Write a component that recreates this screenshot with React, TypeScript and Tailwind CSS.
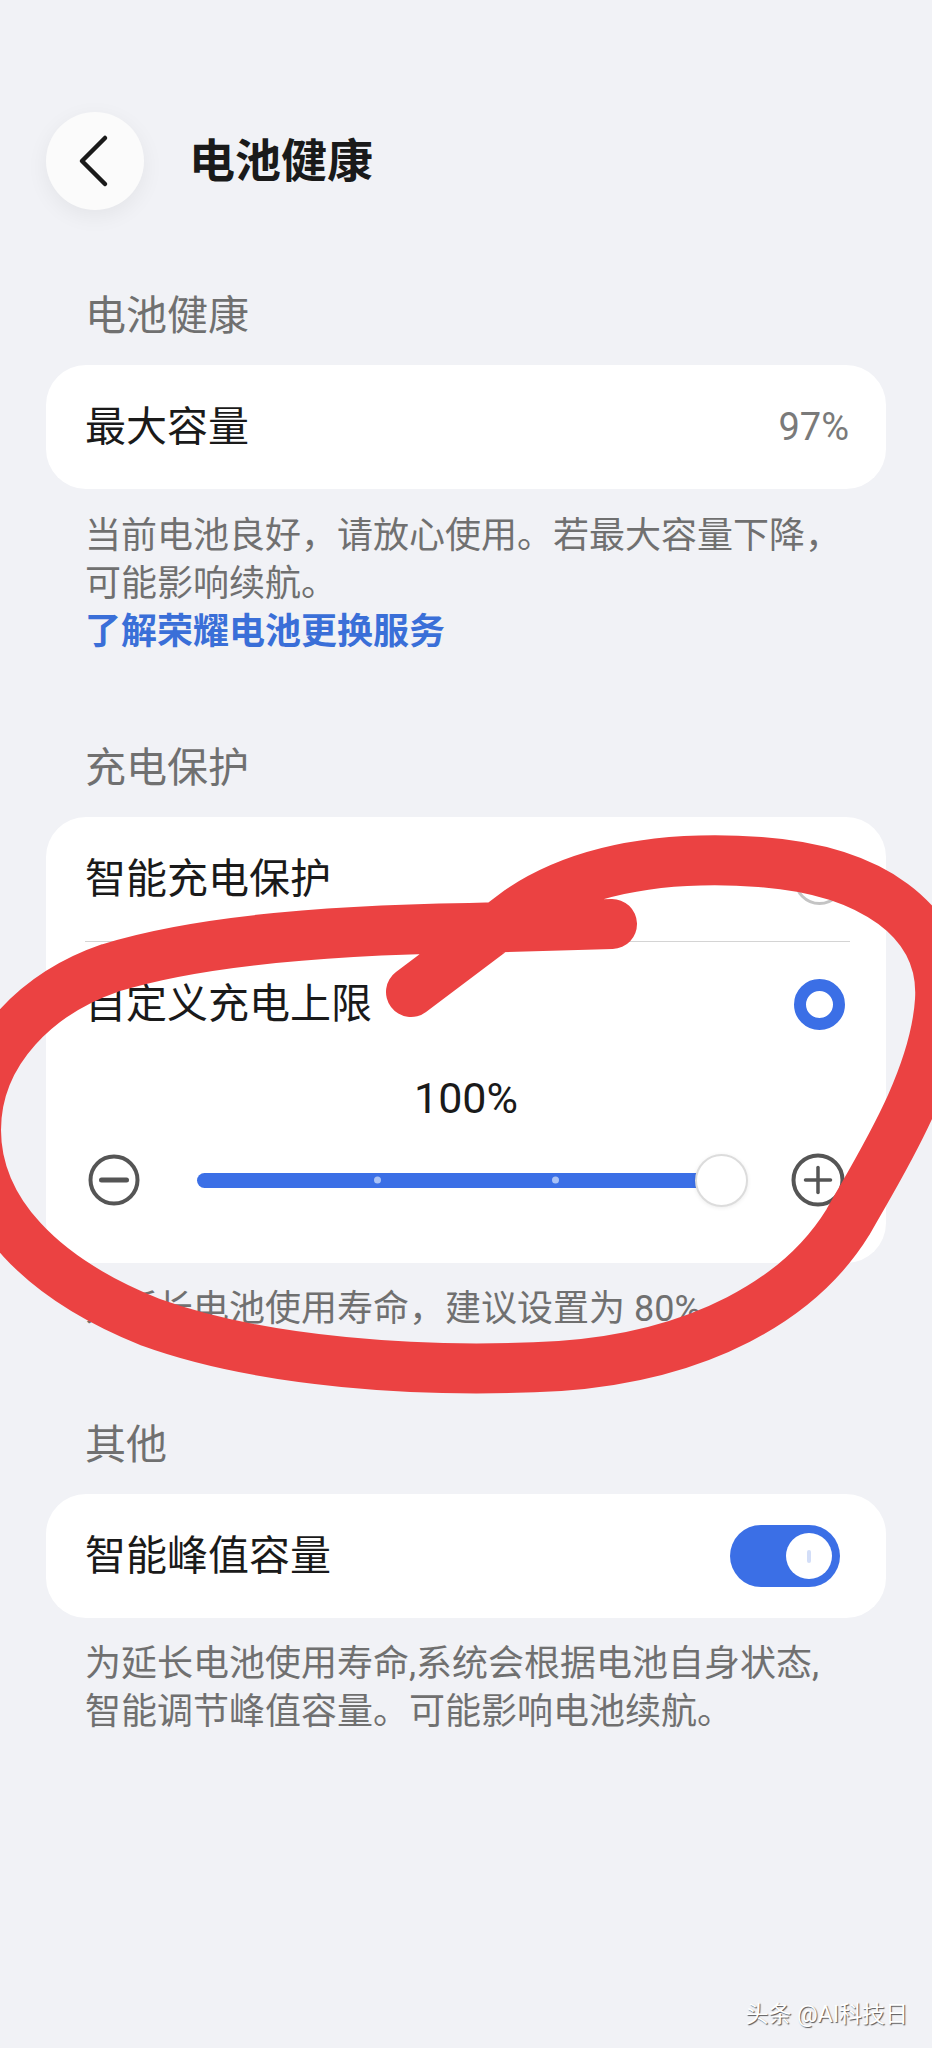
import React from "react";

function SectionTitle({ children, className = "" }: { children: React.ReactNode; className?: string }) {
  return <h2 className={`px-[39px] text-[41px] leading-[56px] text-[#707070] ${className}`}>{children}</h2>;
}

function Card({ children, className = "" }: { children: React.ReactNode; className?: string }) {
  return <div className={`rounded-[40px] bg-white ${className}`}>{children}</div>;
}

function CircleIcon({ plus = false, size = 52 }: { plus?: boolean; size?: number }) {
  const c = size / 2;
  return (
    <svg width={size} height={size} viewBox={`0 0 ${size} ${size}`} className="shrink-0">
      <circle cx={c} cy={c} r={c - 2.5} fill="none" stroke="#555555" strokeWidth="4" />
      <line x1={c - 12.5} y1={c} x2={c + 12.5} y2={c} stroke="#555555" strokeWidth={plus ? 3.5 : 5} strokeLinecap="round" />
      {plus && <line x1={c} y1={c - 12.5} x2={c} y2={c + 12.5} stroke="#555555" strokeWidth="3.5" strokeLinecap="round" />}
    </svg>
  );
}

export default function App() {
  return (
    <div className="relative h-[2048px] w-full overflow-hidden bg-[#f1f2f6] font-[Roboto,'Noto_Sans_CJK_SC',sans-serif]">
      <div className="px-[46px]">
        <header className="flex items-center pt-[112px]">
          <button className="flex h-[98px] w-[98px] shrink-0 items-center justify-center rounded-full bg-[#fbfbfb] shadow-[0_6px_22px_rgba(0,0,0,0.06)]">
            <svg width="98" height="98" viewBox="0 0 98 98">
              <polyline points="59,26 36,49 59,72" fill="none" stroke="#1a1a1a" strokeWidth="4.5" strokeLinecap="round" strokeLinejoin="round" />
            </svg>
          </button>
          <h1 className="ml-[45px] text-[46px] font-semibold leading-none text-[#1a1a1a]">电池健康</h1>
        </header>

        <SectionTitle className="mt-[78px]">电池健康</SectionTitle>
        <Card className="mt-[21px] flex h-[124px] items-center justify-between pl-[39px] pr-[37px]">
          <span className="text-[41px] leading-none text-[#1a1a1a]">最大容量</span>
          <span className="text-[38px] leading-none text-[#7a7a7a]">97%</span>
        </Card>
        <div className="mt-[23px] px-[39px] text-[36px] leading-[48px] text-[#707070]">
          <p>当前电池良好，请放心使用。若最大容量下降，</p>
          <p>可能影响续航。</p>
          <p className="font-semibold text-[#3a6fd8]">了解荣耀电池更换服务</p>
        </div>

        <SectionTitle className="mt-[84px]">充电保护</SectionTitle>
        <Card className="mt-[21px] pb-[55px]">
          <div className="flex h-[124px] items-center justify-between pl-[39px] pr-[41px]">
            <span className="text-[41px] leading-none text-[#1a1a1a]">智能充电保护</span>
            <span className="h-[51px] w-[51px] rounded-full border-[3px] border-[#c4c4c4]" />
          </div>
          <div className="ml-[39px] mr-[36px] h-px bg-[#d4d4d4]" />
          <div className="flex h-[124px] items-center justify-between pl-[39px] pr-[41px]">
            <span className="text-[41px] leading-none text-[#1a1a1a]">自定义充电上限</span>
            <span className="h-[51px] w-[51px] rounded-full border-[12px] border-[#3b6fe6] bg-white" />
          </div>
          <div className="mt-[7px] text-center text-[43px] leading-[50px] text-[#1a1a1a]">100%</div>
          <div className="mt-[29px] flex h-[56px] items-center pl-[42px] pr-[41px]">
            <CircleIcon size={52} />
            <div className="relative ml-[57px] mr-[43px] flex h-[53px] flex-1 items-center">
              <div className="h-[15px] w-[calc(100%-26px)] rounded-full bg-[#3b6fe6]" />
              <span className="absolute left-[177px] top-1/2 h-[7px] w-[7px] -translate-y-1/2 rounded-full bg-[#a9c2f6]" />
              <span className="absolute left-[355px] top-1/2 h-[7px] w-[7px] -translate-y-1/2 rounded-full bg-[#a9c2f6]" />
              <div className="absolute right-0 top-0 h-[53px] w-[53px] rounded-full border-2 border-[#dcdcdc] bg-white shadow-[0_1px_4px_rgba(0,0,0,0.08)]" />
            </div>
            <CircleIcon plus size={54} />
          </div>
        </Card>
        <p className="mt-[22px] px-[39px] text-[36px] leading-[48px] text-[#707070]">为延长电池使用寿命，建议设置为 80%。</p>

        <SectionTitle className="mt-[84px]">其他</SectionTitle>
        <Card className="mt-[21px] flex h-[124px] items-center justify-between pl-[39px] pr-[46px]">
          <span className="text-[41px] leading-none text-[#1a1a1a]">智能峰值容量</span>
          <span className="flex h-[62px] w-[110px] items-center justify-end rounded-full bg-[#3b6fe6] pr-[8px]">
            <span className="flex h-[46px] w-[46px] items-center justify-center rounded-full bg-white">
              <span className="h-[13px] w-[4px] rounded-full bg-[#d3def8]" />
            </span>
          </span>
        </Card>
        <div className="mt-[22px] px-[39px] text-[36px] leading-[48px] text-[#707070]">
          <p>为延长电池使用寿命,系统会根据电池自身状态,</p>
          <p>智能调节峰值容量。可能影响电池续航。</p>
        </div>
      </div>

      {/* hand-drawn annotation */}
      <svg className="pointer-events-none absolute inset-0 h-full w-full" viewBox="0 0 932 2048" preserveAspectRatio="none">
        <path
          d="M 612 924 L 470 928 C 330 930, 200 940, 110 968 C 40 992, -24 1050, -24 1130 C -24 1210, 40 1278, 150 1322 C 260 1362, 420 1374, 560 1366 C 700 1356, 800 1300, 848 1222 C 880 1165, 935 1080, 940 1000 C 945 920, 870 870, 760 862 C 660 855, 580 870, 520 910 L 411 992"
          fill="none"
          stroke="#eb4242"
          strokeWidth="50"
          strokeLinecap="round"
          strokeLinejoin="round"
        />
      </svg>

      <div className="absolute bottom-[22px] right-[24px] text-[23px] leading-none text-white [text-shadow:1px_1px_1px_rgba(0,0,0,0.65)]">
        头条 @AI科技日
      </div>
    </div>
  );
}
